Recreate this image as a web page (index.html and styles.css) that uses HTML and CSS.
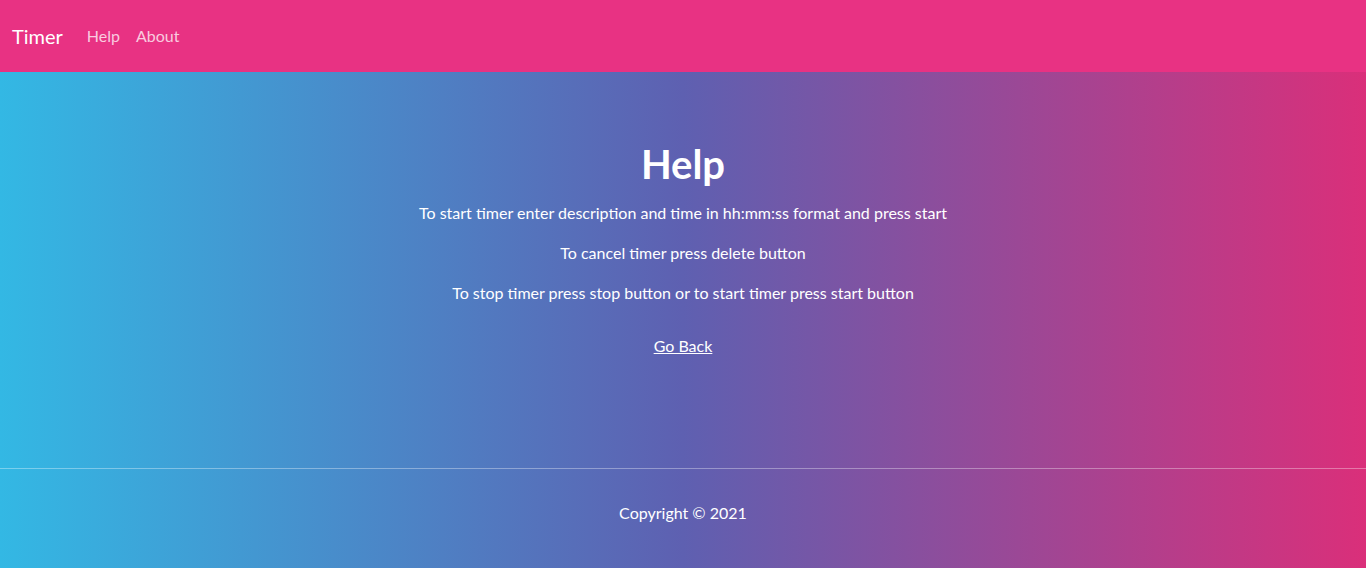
FILE: index.html
```html
<!DOCTYPE html>
<html lang="en">
<head>
<meta charset="utf-8">
<title>Timer - Help</title>
<link rel="stylesheet" href="styles.css">
</head>
<body>
<nav class="navbar">
  <a class="brand" href="#">Timer</a>
  <a class="nav-link" href="#">Help</a>
  <a class="nav-link" href="#">About</a>
</nav>
<main class="page">
  <section class="help">
    <h1 class="title">Help</h1>
    <p>To start timer enter description and time in hh:mm:ss format and press start</p>
    <p>To cancel timer press delete button</p>
    <p>To stop timer press stop button or to start timer press start button</p>
    <a class="back" href="#">Go Back</a>
  </section>
  <footer class="footer">
    <p>Copyright &copy; 2021</p>
  </footer>
</main>
</body>
</html>
```
FILE: styles.css
```css
html, body {
  margin: 0;
  padding: 0;
}
body {
  font-family: Lato, "Noto Sans", sans-serif;
  font-size: 16px;
  line-height: 24px;
  color: #fff;
  height: 568px;
  display: flex;
  flex-direction: column;
}
.navbar {
  height: 72px;
  background: #e83283;
  display: flex;
  align-items: center;
  padding: 0 12px;
  box-sizing: border-box;
  flex: none;
}
.brand {
  color: #fff;
  text-decoration: none;
  font-size: 20px;
  margin-right: 24px;
}
.nav-link {
  color: rgba(255, 255, 255, 0.75);
  text-decoration: none;
  margin-right: 16px;
}
.page {
  flex: 1;
  display: flex;
  flex-direction: column;
  background: linear-gradient(to right, #33b8e4 0%, #5e60b1 50%, #da2f7a 100%);
}
.help {
  text-align: center;
  padding-top: 68px;
  height: 397px;
  box-sizing: border-box;
  border-bottom: 1px solid rgba(255, 255, 255, 0.35);
  flex: none;
}
.title {
  font-size: 40px;
  line-height: 48px;
  font-weight: 700;
  margin: 0 0 13px;
}
.help p {
  margin: 0 0 16px;
}
.back {
  display: inline-block;
  margin-top: 13px;
  color: #fff;
  text-decoration: underline;
}
.footer {
  text-align: center;
  padding-top: 32px;
}
.footer p {
  margin: 0;
}
```
